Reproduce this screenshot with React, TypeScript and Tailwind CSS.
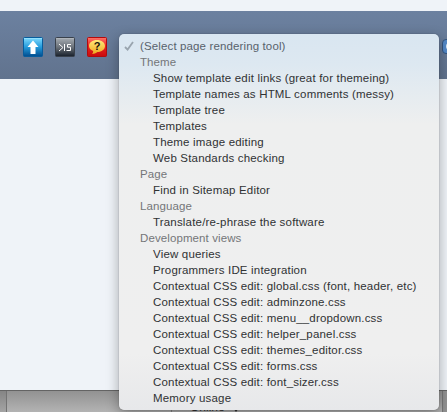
import React from "react";

type Row = { text: string; kind: "current" | "group" | "item" };

const g = (text: string): Row => ({ text, kind: "group" });
const i = (text: string): Row => ({ text, kind: "item" });

const rows: Row[] = [
  { text: "(Select page rendering tool)", kind: "current" },
  g("Theme"),
  i("Show template edit links (great for themeing)"),
  i("Template names as HTML comments (messy)"),
  i("Template tree"),
  i("Templates"),
  i("Theme image editing"),
  i("Web Standards checking"),
  g("Page"),
  i("Find in Sitemap Editor"),
  g("Language"),
  i("Translate/re-phrase the software"),
  g("Development views"),
  i("View queries"),
  i("Programmers IDE integration"),
  i("Contextual CSS edit: global.css (font, header, etc)"),
  i("Contextual CSS edit: adminzone.css"),
  i("Contextual CSS edit: menu__dropdown.css"),
  i("Contextual CSS edit: helper_panel.css"),
  i("Contextual CSS edit: themes_editor.css"),
  i("Contextual CSS edit: forms.css"),
  i("Contextual CSS edit: font_sizer.css"),
  i("Memory usage"),
];

const rowClass = {
  current: "pl-[21px] tracking-[0.13px] text-[#58626c]",
  group: "pl-[21px] tracking-[0.1px] text-[#747679]",
  item: "pl-[34px] tracking-[0.18px] text-[#303234]",
};

function UpIcon() {
  return (
    <svg width="20" height="20" viewBox="0 0 20 20">
      <defs>
        <linearGradient id="up" x1="0" y1="0" x2="0" y2="1">
          <stop offset="0" stopColor="#82dcff" />
          <stop offset="0.5" stopColor="#249bdc" />
          <stop offset="1" stopColor="#004c8e" />
        </linearGradient>
      </defs>
      <rect x="0.5" y="0.5" width="19" height="19" rx="1" fill="url(#up)" stroke="#075d9d" />
      <path d="M1 1.5h18" stroke="#9ce5ff" opacity="0.7" />
      <path d="M10 3.5L15.5 10H12.5V17H7.5V10H4.5Z" fill="#fff" />
    </svg>
  );
}

function SkIcon() {
  return (
    <svg width="20" height="20" viewBox="0 0 20 20">
      <defs>
        <linearGradient id="sk" x1="0" y1="0" x2="0" y2="1">
          <stop offset="0" stopColor="#a9afb5" />
          <stop offset="0.5" stopColor="#6c737b" />
          <stop offset="1" stopColor="#161e29" />
        </linearGradient>
      </defs>
      <rect x="0.5" y="0.5" width="19" height="19" rx="1" fill="url(#sk)" stroke="#39414c" />
      <path d="M1.5 1.5h17" stroke="#b9bec3" opacity="0.6" />
      <path d="M4 7L8 10.5L4 14M9.5 7V14" fill="none" stroke="#fff" />
      <path d="M16 7.5H12.5V10.2H15.5V13.5H11.5" fill="none" stroke="#fff" />
    </svg>
  );
}

function HelpIcon() {
  return (
    <svg width="20" height="20" viewBox="0 0 20 20">
      <defs>
        <linearGradient id="help" x1="0" y1="0" x2="0" y2="1">
          <stop offset="0" stopColor="#ff7468" />
          <stop offset="0.45" stopColor="#e92420" />
          <stop offset="1" stopColor="#c90b0c" />
        </linearGradient>
        <linearGradient id="bubble" x1="0" y1="0" x2="0" y2="1">
          <stop offset="0" stopColor="#ffe97a" />
          <stop offset="1" stopColor="#f0a91e" />
        </linearGradient>
      </defs>
      <rect x="0.5" y="0.5" width="19" height="19" rx="1" fill="url(#help)" stroke="#b30b0d" />
      <path
        d="M10 3C14.5 3 18 5.5 18 9C18 12.5 14.5 15 10.5 15C9 16.3 7 17 5 17C6 16 6.3 15 6.1 14C3.5 13 2 11.2 2 9C2 5.5 5.5 3 10 3Z"
        fill="url(#bubble)"
      />
      <text x="10" y="13" textAnchor="middle" fontFamily="Liberation Sans, sans-serif" fontWeight="700" fontSize="11" fill="#17130c">
        ?
      </text>
    </svg>
  );
}

function SelectMenu() {
  return (
    <div className="absolute left-[119px] top-[34px] h-[376px] w-[320px] rounded-[5px] bg-[linear-gradient(180deg,#d9e6f1_0%,#dde8f1_8%,#eeefef_24%,#efefef_85%,#e7e8ea_100%)] py-1 shadow-[0_4px_13px_rgba(0,0,0,0.32),0_0_1px_rgba(0,0,0,0.5)]">
      {rows.map((row) => (
        <div
          key={row.text}
          className={`relative h-4 whitespace-nowrap font-['Liberation_Sans',Arial,sans-serif] text-[11.5px] leading-4 ${rowClass[row.kind]}`}
        >
          {row.kind === "current" && (
            <svg className="absolute left-[5px] top-[3px]" width="10" height="10" viewBox="0 0 10 10">
              <path d="M1 6L3.6 8.6L9 1" fill="none" stroke="#99a4ae" strokeWidth="1.8" />
            </svg>
          )}
          {row.text}
        </div>
      ))}
    </div>
  );
}

export default function App() {
  return (
    <div className="relative flex h-[412px] w-[447px] flex-col overflow-hidden bg-[#eff3f8]">
      <div className="h-[11px] shrink-0" />
      <header className="flex h-[68px] shrink-0 items-start gap-3 bg-linear-to-b from-[#6c81a0] to-[#61738e] pl-[23px] pt-[26px]">
        <UpIcon />
        <SkIcon />
        <HelpIcon />
        <div className="-mr-4 ml-auto mt-[2px] h-[15px] w-[21px] shrink-0 rounded-[4px] border border-[#34557f] bg-[#5388c7]">
          <div className="ml-[3px] mt-[3px] h-[7px] w-2 rounded-full bg-[#dce9f6]" />
        </div>
      </header>
      <main className="grow" />
      <footer className="flex h-[22px] shrink-0 border-t border-[#646464] bg-linear-to-b from-[#929292] to-[#b3b3b3]">
        <div className="w-[7px] border-r border-[#737373] bg-linear-to-b from-[#858585] to-[#a4a4a4]" />
        <div className="w-[165px] border-r border-[#858585]" />
        <div className="flex h-[21px] items-end gap-2 pl-[18px] font-['Liberation_Sans',Arial,sans-serif] text-[12px] leading-[10px] text-[#333]">
          <span>Online</span>
          <svg width="6" height="4" viewBox="0 0 6 4">
            <path d="M0 0H6L3 4Z" fill="#333" />
          </svg>
        </div>
        <div className="ml-auto w-[5px] border-l border-[#777] bg-[#929292]" />
      </footer>
      <SelectMenu />
    </div>
  );
}
